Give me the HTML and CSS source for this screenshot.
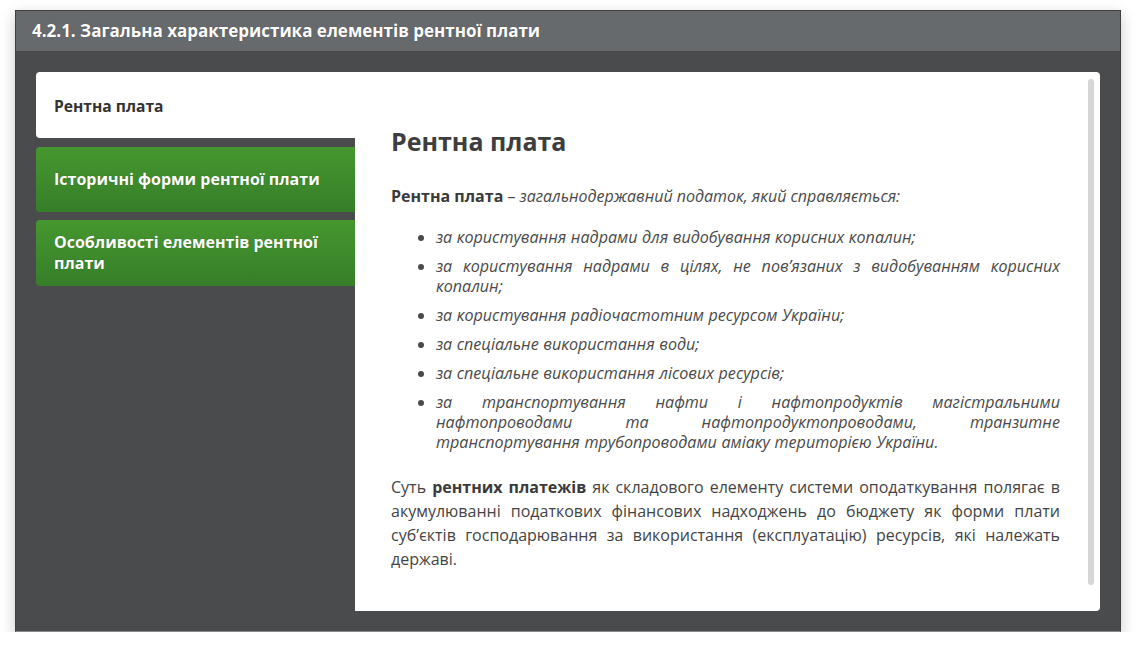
FILE: index.html
```html
<!DOCTYPE html>
<html lang="uk">
<head>
<meta charset="utf-8">
<title>Рентна плата</title>
<link rel="stylesheet" href="styles.css">
</head>
<body>
<div class="frame">
  <div class="header">4.2.1. Загальна характеристика елементів рентної плати</div>
  <div class="stage">
    <div class="tabs">
      <div class="tab-list">
        <div class="tab active">Рентна плата</div>
        <div class="tab">Історичні форми рентної плати</div>
        <div class="tab">Особливості елементів рентної плати</div>
      </div>
      <div class="panel">
        <h1 class="title">Рентна плата</h1>
        <p class="lead"><b>Рентна плата</b> – <i>загальнодержавний податок, який справляється:</i></p>
        <ul class="items">
          <li>за користування надрами для видобування корисних копалин;</li>
          <li>за користування надрами в цілях, не пов’язаних з видобуванням корисних копалин;</li>
          <li>за користування радіочастотним ресурсом України;</li>
          <li>за спеціальне використання води;</li>
          <li>за спеціальне використання лісових ресурсів;</li>
          <li>за транспортування нафти і нафтопродуктів магістральними нафтопроводами та нафтопродуктопроводами, транзитне транспортування трубопроводами аміаку територією України.</li>
        </ul>
        <p class="body-text">Суть <b>рентних платежів</b> як складового елементу системи оподаткування полягає в акумулюванні податкових фінансових надходжень до бюджету як форми плати суб’єктів господарювання за використання (експлуатацію) ресурсів, які належать державі.</p>
        <div class="scrollbar"></div>
      </div>
    </div>
  </div>
</div>
</body>
</html>
```
FILE: styles.css
```css
html, body {
  margin: 0;
  padding: 0;
  background: #ffffff;
}
body {
  font-family: "Open Sans", "Noto Sans", sans-serif;
  color: #444;
}
.frame {
  margin: 10px 15px 0 15px;
  width: 1106px;
  height: 622px;
  box-sizing: border-box;
  border: 1px solid #3e4042;
  border-bottom-color: #8a8a8a;
  box-shadow: 0 5px 14px rgba(0, 0, 0, 0.22);
  display: flex;
  flex-direction: column;
  background: #4a4b4d;
}
.header {
  height: 40px;
  flex: none;
  background: #676a6d;
  color: #fff;
  font-weight: 700;
  font-size: 17px;
  line-height: 40px;
  padding-left: 16px;
  text-shadow: 0 0 1px rgba(0, 0, 0, 0.3);
}
.stage {
  flex: 1;
  padding: 21px 20px 20px 20px;
  display: flex;
}
.tabs {
  flex: 1;
  display: flex;
}
.tab-list {
  width: 319px;
  flex: none;
  display: flex;
  flex-direction: column;
  gap: 8px;
}
.tab {
  height: 66px;
  box-sizing: border-box;
  padding: 0 18px;
  display: flex;
  align-items: center;
  font-weight: 700;
  font-size: 16px;
  line-height: 21px;
  color: #fff;
  border-radius: 4px 0 0 4px;
  background: linear-gradient(#46972f, #367e29);
  text-shadow: 0 0 1px rgba(0, 0, 0, 0.25);
}
.tab.active {
  background: #fff;
  color: #333;
  text-shadow: none;
  font-size: 15.6px;
  height: 66px;
  padding-top: 2px;
  margin-bottom: 1px;
}
.tab:nth-child(2) {
  height: 65px;
}
.panel {
  flex: 1;
  position: relative;
  background: #fff;
  border-radius: 0 4px 4px 0;
  padding: 52px 40px 0 36px;
}
.title {
  margin: 0 0 25px 0;
  font-size: 25px;
  font-weight: 700;
  color: #3e3e3e;
  line-height: 35px;
}
.lead {
  margin: 0 0 19px 0;
  font-size: 16px;
  line-height: 24px;
}
.lead b {
  color: #3a3a3a;
}
.lead i {
  color: #4a4a4a;
}
.items {
  margin: 0 0 23px 0;
  padding-left: 45px;
  font-size: 16.1px;
  word-spacing: 0.4px;
  line-height: 20px;
  font-style: italic;
  text-align: justify;
  color: #4a4a4a;
}
.items li {
  margin-bottom: 9px;
}
.items li:last-child {
  margin-bottom: 0;
}
.body-text {
  margin: 0;
  font-size: 16px;
  line-height: 24px;
  text-align: justify;
}
.body-text b {
  color: #3a3a3a;
}
.scrollbar {
  position: absolute;
  right: 6px;
  top: 7px;
  bottom: 26px;
  width: 6px;
  border-radius: 3px;
  background: #d6d6d6;
}
```
